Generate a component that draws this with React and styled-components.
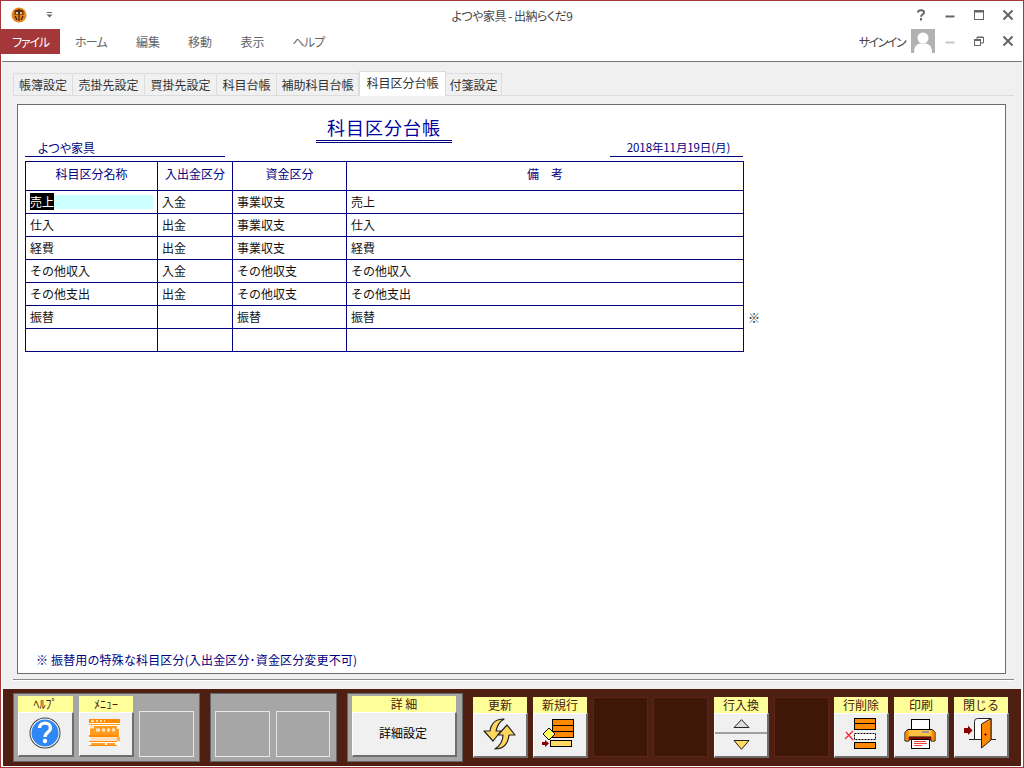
import React from 'react';
import styled, { createGlobalStyle } from 'styled-components';

const GlobalStyle = createGlobalStyle`
html, body {
  margin: 0;
  padding: 0;
  background: #fff;
}
body {
  font-family: "Noto Sans CJK JP", "Liberation Sans", sans-serif;
  font-size: 12px;
  overflow: hidden;
}
`;

const Window = styled.div`
box-sizing: border-box;
width: 1024px;
height: 768px;
border: 1px solid #a4373a;
background: #fff;
display: flex;
flex-direction: column;
`;

const TitleBar = styled.div`
height: 27px;
flex: none;
display: grid;
grid-template-columns: 1fr auto 1fr;
align-items: center;
padding-top: 1px;
box-sizing: border-box;
color: #444;
font-feature-settings: "palt";
`;

const WindowTitle = styled.div`
letter-spacing: -0.5px;
`;

const QuickAccess = styled.div`
display: flex;
align-items: center;
padding-left: 10px;
gap: 19px;
`;

const WindowControls = styled.div`
display: flex;
justify-content: flex-end;
align-items: center;
padding-right: 1px;
`;

const ControlSlot = styled.div`
width: 29px;
height: 24px;
display: flex;
align-items: center;
justify-content: center;
`;

const Ribbon = styled.div`
height: 26px;
flex: none;
display: flex;
align-items: center;
font-feature-settings: "palt";
`;

const FileTab = styled.div`
width: 59px;
height: 25px;
background: #a4373a;
color: #fff;
display: flex;
align-items: center;
justify-content: center;
font-size: 12px;
letter-spacing: -1.2px;
`;

const MenuItem = styled.div`
color: #666;
width: ${p => p.$w}px;
text-align: center;
font-size: 12px;
letter-spacing: ${p => (p.$kana ? -0.8 : 0)}px;
`;

const RibbonRight = styled.div`
margin-left: auto;
display: flex;
align-items: center;
padding-right: 1px;
color: #444;
`;

const SignIn = styled.span`
font-size: 12px;
margin-right: 6px;
letter-spacing: -1.5px;
`;

const TabArea = styled.div`
flex: 1;
min-height: 0;
margin: 7px 1px 0 1px;
border-top: 1px solid #7a7a7a;
background: #f0f0f0;
padding: 8px 0 9px 11px;
display: flex;
flex-direction: column;
`;

const TabStrip = styled.div`
height: 26px;
flex: none;
display: flex;
align-items: flex-end;
margin-right: 8px;
border-bottom: 1px solid #dcdcdc;
box-sizing: border-box;
`;

const Tab = styled.div`
box-sizing: border-box;
width: ${p => p.$w}px;
height: ${p => (p.$active ? 25 : 23)}px;
margin-bottom: -1px;
background: ${p => (p.$active ? '#fff' : '#f0f0f0')};
border: 1px solid #dcdcdc;
border-bottom: ${p => (p.$active ? 'none' : '1px solid #dcdcdc')};
border-left: ${p => (p.$first || p.$active ? '1px solid #dcdcdc' : 'none')};
display: flex;
align-items: center;
justify-content: center;
color: #333;
padding-bottom: ${p => (p.$active ? 3 : 0)}px;
`;

const TabBody = styled.div`
flex: 1;
min-height: 0;
margin-right: 8px;
padding: 8px 8px 5px 4px;
border-bottom: 1px solid #8a8a8a;
box-shadow: 0 1px 0 #fff;
display: flex;
`;

const Sheet = styled.div`
flex: 1;
background: #fff;
border: 1px solid #6d6d6d;
padding: 12px 7px 5px 7px;
display: flex;
flex-direction: column;
color: #000080;
`;

const SheetHead = styled.div`
display: flex;
width: 719px;
height: 44px;
flex: none;
`;

const Company = styled.div`
width: 200px;
height: 24px;
margin-top: 16px;
box-sizing: border-box;
border-bottom: 1px solid #000080;
padding: 6px 0 0 13px;
line-height: 17px;
font-feature-settings: "palt";
`;

const Title = styled.div`
width: 136px;
height: 26px;
margin: 0 158px 0 91px;
box-sizing: border-box;
text-align: center;
border-bottom: 3px double #000080;
font-size: 18px;
line-height: 20px;
letter-spacing: 1px;
color: #0000a0;
`;

const DateBox = styled.div`
width: 133px;
height: 24px;
margin-top: 16px;
box-sizing: border-box;
border-bottom: 1px solid #000080;
padding: 6px 0 0 4px;
line-height: 17px;
text-align: center;
font-size: 11.5px;
letter-spacing: -0.1px;
`;

const Table = styled.table`
border-collapse: collapse;
table-layout: fixed;
width: 740px;
`;

const HeadCell = styled.th`
border: 1px solid #000080;
height: 29px;
box-sizing: border-box;
padding: 0 0 6px 0;
font-weight: 400;
font-size: 12px;
color: #000080;
text-align: center;
white-space: pre;
`;

const Cell = styled.td`
border: 1px solid #000080;
height: 23px;
padding: 0 0 0 4px;
color: #111;
font-size: 12px;
line-height: 16px;
box-sizing: border-box;
`;

const MarkCell = styled.td`
padding: 0 0 0 4px;
color: #222;
font-size: 12px;
`;

const ActiveInput = styled.div`
box-sizing: border-box;
background: #ccffff;
height: 14px;
width: 124px;
line-height: 14px;
margin-left: -1px;
padding-left: 1px;
`;

const Selected = styled.span`
background: #000;
color: #fff;
`;

const Note = styled.div`
margin-top: auto;
padding-left: 11px;
line-height: 16px;
letter-spacing: 0.15px;
`;

const Footer = styled.div`
height: 77px;
flex: none;
margin: 0 2px 1px 2px;
background: #4f2012;
padding: 4px 0 0 10px;
box-sizing: border-box;
display: flex;
align-items: flex-start;
gap: 10px;
`;

const Group = styled.div`
box-sizing: border-box;
height: 69px;
background: #a6a6a6;
border: 1px solid #666;
padding: 3px 5px 4px 4px;
display: flex;
align-items: flex-end;
gap: ${p => p.$gap || 5}px;
`;

const ButtonStack = styled.div`
display: flex;
gap: 5px;
height: 61px;
margin-top: 4px;
`;

const RightStack = styled(ButtonStack)`
margin-left: -4px;
`;

const EmptyBox = styled.div`
box-sizing: border-box;
width: ${p => p.$w || 55}px;
height: 46px;
margin-bottom: 0;
border: 1px solid #e6e6e6;
`;

const DarkSlot = styled.div`
box-sizing: border-box;
width: 55px;
height: 60px;
background: #3f1708;
border: 1px solid #5c2516;
`;

const ButtonWrap = styled.div`
width: ${p => p.$w || 55}px;
height: 61px;
display: flex;
flex-direction: column;
`;

const ButtonLabel = styled.div`
height: 16px;
width: calc(100% - 1px);
flex: none;
background: #ffff99;
color: #4a1a08;
font-size: 12px;
line-height: 16px;
text-align: center;
`;

const ButtonBody = styled.div`
flex: 1;
min-height: 0;
box-sizing: border-box;
background: #f0f0f0;
border-top: 1px solid #fff;
border-left: 1px solid #fff;
border-right: 2px solid #6e6e6e;
border-bottom: 2px solid #6e6e6e;
padding: ${p => (p.$split ? '0' : '0 2px 3px 0')};
display: flex;
flex-direction: column;
align-items: center;
justify-content: center;
color: #000;
`;

const UpperHalf = styled.div`
flex: none;
height: 20px;
width: 100%;
box-sizing: border-box;
display: flex;
align-items: center;
justify-content: center;
border-bottom: 2px solid #a0a0a0;
`;

const LowerHalf = styled.div`
flex: 1;
width: 100%;
display: flex;
align-items: center;
justify-content: center;
`;

const GreyGroup = styled(Group)`
width: ${p => p.$w}px;
`;

const FootButton = ({ label, w, split, children }) => (
  <ButtonWrap $w={w}>
    <ButtonLabel>{label}</ButtonLabel>
    <ButtonBody $split={split}>{children}</ButtonBody>
  </ButtonWrap>
);

const AppLogo = () => (
  <svg width="16" height="16" viewBox="0 0 16 16">
    <circle cx="8" cy="8" r="7.5" fill="#e8861e" />
    <path d="M3 4 L8 2 L13 4 L11 7 L5 7 Z" fill="#5a2a0a" />
    <path d="M4 9 L6 13 M8 8 V14 M12 9 L10 13 M3 7 H13" stroke="#3a1a08" strokeWidth="1.2" />
    <circle cx="6" cy="6" r="1" fill="#ffd" />
    <circle cx="10" cy="6" r="1" fill="#ffd" />
  </svg>
);

const QuickDrop = () => (
  <svg width="7" height="6" viewBox="0 0 7 6">
    <path d="M1 0.5 H6" stroke="#666" />
    <path d="M0.5 2.5 H6.5 L3.5 5.5 Z" fill="#666" />
  </svg>
);

const Glyph = ({ children }) => (
  <svg width="14" height="14" viewBox="0 0 14 14" fill="none" stroke="#666">
    {children}
  </svg>
);

const HelpMark = () => (
  <svg width="14" height="14" viewBox="0 0 14 14" fill="none" stroke="#666" strokeWidth="2">
    <path d="M4 4.5 C4 1.5 10 1.5 10 4.5 C10 6.5 7 6.5 7 8.7" />
    <path d="M7 10 V12.5" />
  </svg>
);

const CloseMark = () => (
  <Glyph>
    <path d="M2.5 2.5 L11.5 11.5 M11.5 2.5 L2.5 11.5" strokeWidth="2" />
  </Glyph>
);

const MinMark = ({ light }) => (
  <svg width="14" height="14" viewBox="0 0 14 14">
    <path d="M2.5 8.5 H11.5" stroke={light ? '#c4c4c4' : '#666'} strokeWidth="2" />
  </svg>
);

const MaxMark = () => (
  <Glyph>
    <rect x="2.5" y="2.5" width="9" height="9" />
    <path d="M2.5 3.5 H11.5" strokeWidth="2" />
  </Glyph>
);

const RestoreMark = () => (
  <Glyph>
    <rect x="2.5" y="5.5" width="6" height="6" />
    <path d="M2.5 6.5 H8.5" />
    <path d="M5 5 V3 H11.5 V9 H9" />
    <path d="M5 3.5 H11.5" />
  </Glyph>
);

const Avatar = () => (
  <svg width="24" height="24" viewBox="0 0 24 24">
    <rect width="24" height="24" fill="#b2b2b2" />
    <circle cx="12" cy="9" r="5.5" fill="#fff" />
    <path d="M3 24 C3 17 6 15 9 14.5 H15 C18 15 21 17 21 24 Z" fill="#fff" />
  </svg>
);

const HelpIcon = () => (
  <svg width="32" height="32" viewBox="0 0 32 32">
    <circle cx="16" cy="16" r="15.5" fill="#444" />
    <circle cx="16" cy="16" r="14.5" fill="#fff" />
    <circle cx="16" cy="16" r="13.5" fill="#2f86f5" />
    <path d="M10.5 11 C10.5 4.5 21.5 4.5 21.5 11 C21.5 15.5 16 15 16 20" fill="none" stroke="#fff" strokeWidth="3.4" />
    <circle cx="16" cy="24" r="2.2" fill="#fff" />
  </svg>
);

const MenuIcon = () => (
  <svg width="32" height="28" viewBox="0 0 32 28">
    <rect x="0" y="0" width="31" height="27" fill="#fff" />
    <rect x="0" y="0" width="31" height="4" fill="#ff8c00" />
    <path d="M2 2 H5 M7 2 H9 M11 2 H13 M15 2 H16" stroke="#ffe0a0" strokeWidth="2" />
    <rect x="0" y="5" width="31" height="1" fill="#ff9c20" />
    <rect x="1" y="7" width="27" height="10" fill="#ff9c20" />
    <path d="M1 8 H5 M7 11 H11 M13 11 H16 M18 11 H21 M23 11 H26" stroke="#ffe8c0" strokeWidth="3" fill="none" />
    <rect x="0" y="16" width="28" height="2" fill="#ff8c00" />
    <rect x="28" y="10" width="2" height="8" fill="#ff9c20" />
    <rect x="1" y="18" width="27" height="4" fill="#ffe0c0" />
    <rect x="28" y="18" width="3" height="4" fill="#ffb040" />
    <rect x="0" y="22" width="28" height="1" fill="#ff8c00" />
    <path d="M2 25 H16 M18 25 H26" stroke="#ffa030" strokeWidth="2" />
    <rect x="0" y="26" width="28" height="1" fill="#ff8c00" />
  </svg>
);

const RefreshIcon = () => (
  <svg width="33" height="32" viewBox="0 0 33 32">
    <path d="M21 1 C12 1 8 6 7 13 L1 13 L10 23 L18 13 L13 13 C14 8 16 4 21 1 Z" fill="#ffd75e" stroke="#222" strokeWidth="1.2" strokeLinejoin="round" />
    <path d="M12 31 C21 31 25 26 26 17 L32 17 L24 7 L15 17 L20 17 C20 23 18 27 12 31 Z" fill="#ffd75e" stroke="#222" strokeWidth="1.2" strokeLinejoin="round" />
  </svg>
);

const NewRowIcon = () => (
  <svg width="34" height="30" viewBox="0 0 34 30">
    <rect x="10.5" y="0.5" width="21" height="18" fill="#ff8800" stroke="#000" />
    <path d="M10 6.5 H32 M10 12.5 H32" stroke="#000" />
    <rect x="8.5" y="21.5" width="21" height="6" fill="#ffdb66" stroke="#000" />
    <path d="M7 9 L13 15 L7 21 L1 15 Z" fill="#ffff66" stroke="#000" />
    <path d="M0 23 H3 V21 L7 24.5 L3 28 V26 H0 Z" fill="#8b0000" />
  </svg>
);

const UpIcon = () => (
  <svg width="17" height="9" viewBox="0 0 17 9">
    <path d="M8.5 0.7 L16 8.5 H1 Z" fill="#dcdcdc" stroke="#222" />
  </svg>
);

const DownIcon = () => (
  <svg width="17" height="10" viewBox="0 0 17 10">
    <path d="M1 0.5 H16 L8.5 9.3 Z" fill="#ffdb66" stroke="#222" />
  </svg>
);

const DeleteRowIcon = () => (
  <svg width="33" height="32" viewBox="0 0 33 32">
    <rect x="10.5" y="0.5" width="21" height="11" fill="#ff8800" stroke="#000" />
    <path d="M10 5.5 H32" stroke="#000" />
    <rect x="10.5" y="15.5" width="21" height="6" fill="#fff" stroke="#000" strokeDasharray="2 1" />
    <rect x="10.5" y="24.5" width="21" height="6" fill="#ff8800" stroke="#000" />
    <path d="M2 14 L9 22 M9 13 L1 21" stroke="#f03040" strokeWidth="1.4" fill="none" />
  </svg>
);

const PrinterIcon = () => (
  <svg width="32" height="30" viewBox="0 0 32 30">
    <rect x="7.5" y="0.5" width="18" height="10" fill="#fff" stroke="#000" />
    <path d="M4 10.5 H28 L31 13 V22 H27 V18 H5 V22 H1 V13 Z" fill="#ffc040" stroke="#000" />
    <rect x="1.5" y="12" width="3" height="9.5" fill="#ff8800" />
    <rect x="27.5" y="12" width="3" height="9.5" fill="#ff8800" />
    <rect x="18" y="12" width="7" height="2" fill="#999" />
    <rect x="5" y="18" width="22" height="3" fill="#7a0a0a" />
    <rect x="7.5" y="20.5" width="18" height="9" fill="#fff" stroke="#000" />
    <path d="M10 22.5 H22 M10 24.5 H23 M10 26.5 H18" stroke="#f04040" />
  </svg>
);

const DoorIcon = () => (
  <svg width="33" height="31" viewBox="0 0 33 31">
    <path d="M10.5 3.5 Q10.5 0.5 13.5 0.5 H27 V21.5 H10.5 Z" fill="#fff" stroke="#222" />
    <path d="M27 0.5 L17.5 6 V30 L27 22 Z" fill="#ff8800" stroke="#222" />
    <path d="M20 16.5 H23 M21.5 15 V18" stroke="#a00" />
    <path d="M5 21.5 H17.5 M27 21.5 H32" stroke="#222" />
    <path d="M0 10 H4 V7.5 L8.5 12.5 L4 17 V15 H0 Z" fill="#8b0000" />
  </svg>
);

const tabs = [
  { name: '帳簿設定', w: 60, first: true },
  { name: '売掛先設定', w: 72 },
  { name: '買掛先設定', w: 72 },
  { name: '科目台帳', w: 60 },
  { name: '補助科目台帳', w: 82 },
  { name: '科目区分台帳', w: 87, active: true },
  { name: '付箋設定', w: 56 }
];

const menus = [
  { name: 'ホーム', w: 62, kana: true },
  { name: '編集', w: 52 },
  { name: '移動', w: 52 },
  { name: '表示', w: 53 },
  { name: 'ヘルプ', w: 59, kana: true }
];

const rows = [
  { name: '売上', kind: '入金', fund: '事業収支', memo: '売上' },
  { name: '仕入', kind: '出金', fund: '事業収支', memo: '仕入' },
  { name: '経費', kind: '出金', fund: '事業収支', memo: '経費' },
  { name: 'その他収入', kind: '入金', fund: 'その他収支', memo: 'その他収入' },
  { name: 'その他支出', kind: '出金', fund: 'その他収支', memo: 'その他支出' },
  { name: '振替', kind: '', fund: '振替', memo: '振替', mark: '※' },
  { name: '', kind: '', fund: '', memo: '' }
];

function App () {
  return (
    <Window>
      <GlobalStyle />
      <TitleBar>
        <QuickAccess>
          <AppLogo />
          <QuickDrop />
        </QuickAccess>
        <WindowTitle>よつや家具 - 出納らくだ9</WindowTitle>
        <WindowControls>
          <ControlSlot><HelpMark /></ControlSlot>
          <ControlSlot><MinMark /></ControlSlot>
          <ControlSlot><MaxMark /></ControlSlot>
          <ControlSlot><CloseMark /></ControlSlot>
        </WindowControls>
      </TitleBar>
      <Ribbon>
        <FileTab>ファイル</FileTab>
        {menus.map(m => <MenuItem key={m.name} $w={m.w} $kana={m.kana}>{m.name}</MenuItem>)}
        <RibbonRight>
          <SignIn>サインイン</SignIn>
          <Avatar />
          <ControlSlot><MinMark light /></ControlSlot>
          <ControlSlot><RestoreMark /></ControlSlot>
          <ControlSlot><CloseMark /></ControlSlot>
        </RibbonRight>
      </Ribbon>
      <TabArea>
        <TabStrip>
          {tabs.map(t => (
            <Tab key={t.name} $w={t.w} $first={t.first} $active={t.active}>{t.name}</Tab>
          ))}
        </TabStrip>
        <TabBody>
          <Sheet>
            <SheetHead>
              <Company>よつや家具</Company>
              <Title>科目区分台帳</Title>
              <DateBox>2018年11月19日(月)</DateBox>
            </SheetHead>
            <Table>
              <colgroup>
                <col style={{ width: 132 }} />
                <col style={{ width: 75 }} />
                <col style={{ width: 114 }} />
                <col style={{ width: 397 }} />
                <col style={{ width: 22 }} />
              </colgroup>
              <thead>
                <tr>
                  <HeadCell>科目区分名称</HeadCell>
                  <HeadCell>入出金区分</HeadCell>
                  <HeadCell>資金区分</HeadCell>
                  <HeadCell>{'備　考'}</HeadCell>
                </tr>
              </thead>
              <tbody>
                {rows.map((r, i) => (
                  <tr key={i}>
                    <Cell>
                      {i === 0
                        ? <ActiveInput><Selected>{r.name}</Selected></ActiveInput>
                        : r.name}
                    </Cell>
                    <Cell>{r.kind}</Cell>
                    <Cell>{r.fund}</Cell>
                    <Cell>{r.memo}</Cell>
                    <MarkCell>{r.mark}</MarkCell>
                  </tr>
                ))}
              </tbody>
            </Table>
            <Note>※ 振替用の特殊な科目区分(入出金区分･資金区分変更不可)</Note>
          </Sheet>
        </TabBody>
      </TabArea>
      <Footer>
        <GreyGroup $w={187}>
          <FootButton label="ﾍﾙﾌﾟ" w={56}><HelpIcon /></FootButton>
          <FootButton label="ﾒﾆｭｰ"><MenuIcon /></FootButton>
          <EmptyBox />
        </GreyGroup>
        <GreyGroup $w={127} $gap={6}>
          <EmptyBox />
          <EmptyBox $w={54} />
        </GreyGroup>
        <GreyGroup $w={116}>
          <FootButton label="詳 細" w={106}>詳細設定</FootButton>
        </GreyGroup>
        <ButtonStack>
          <FootButton label="更新"><RefreshIcon /></FootButton>
          <FootButton label="新規行"><NewRowIcon /></FootButton>
          <DarkSlot />
          <DarkSlot />
        </ButtonStack>
        <RightStack>
          <FootButton label="行入換" split>
            <UpperHalf><UpIcon /></UpperHalf>
            <LowerHalf><DownIcon /></LowerHalf>
          </FootButton>
          <DarkSlot />
          <FootButton label="行削除"><DeleteRowIcon /></FootButton>
          <FootButton label="印刷"><PrinterIcon /></FootButton>
          <FootButton label="閉じる"><DoorIcon /></FootButton>
        </RightStack>
      </Footer>
    </Window>
  );
}

export default App;
